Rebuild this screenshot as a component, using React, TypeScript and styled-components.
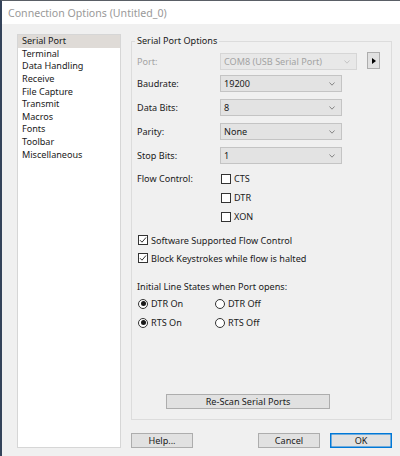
import React from "react";
import styled, { createGlobalStyle } from "styled-components";

const GlobalStyle = createGlobalStyle`
  html, body { margin: 0; padding: 0; background: #f0f0f0; }
  body {
    font-family: "Noto Sans", "Open Sans", sans-serif;
    font-size: 9.1px;
    color: #1a1a1a;
  }
  * { box-sizing: border-box; }
`;

const Window = styled.div`
  width: 400px;
  height: 456px;
  display: flex;
  flex-direction: column;
  border-top: 1px solid #5a5f66;
  border-left: 2px solid #34435a;
  background: #f0f0f0;
  overflow: hidden;
`;

const TitleBar = styled.div`
  height: 23px;
  flex: none;
  display: flex;
  align-items: center;
  padding-left: 6px;
  background: #ffffff;
  color: #999999;
  font-size: 10.6px;
`;

const Body = styled.div`
  flex: 1;
  display: grid;
  grid-template-columns: 104px 261px;
  column-gap: 10px;
  padding: 10px 8px 8px 15px;
`;

const ListBox = styled.ul`
  margin: 0;
  padding: 0;
  list-style: none;
  background: #ffffff;
  border: 1px solid #d6d6d6;
`;

const ListItem = styled.li<{ $selected?: boolean }>`
  height: 12.65px;
  line-height: 12.65px;
  padding-left: 4px;
  white-space: nowrap;
  background: ${(p) => (p.$selected ? "#dfdbd7" : "transparent")};
`;

const RightColumn = styled.div`
  display: flex;
  flex-direction: column;
  gap: 13px;
`;

const Group = styled.fieldset`
  flex: 1;
  margin: 0;
  padding: 0 6px 10px 5px;
  border: 1px solid #dcdcdc;
  min-width: 0;
`;

const Legend = styled.legend`
  padding: 0 2px;
  margin-left: -2px;
  line-height: 14px;
  height: 14px;
`;

const FieldRow = styled.div<{ $mt: number; $h?: number }>`
  display: grid;
  grid-template-columns: 83px 1fr;
  align-items: center;
  margin-top: ${(p) => p.$mt}px;
  height: ${(p) => (p.$h ? `${p.$h}px` : "auto")};
`;

const FlowRow = styled.div`
  display: grid;
  grid-template-columns: 83px 1fr;
  align-items: start;
  margin-top: 6px;
`;

const FieldLabel = styled.span<{ $disabled?: boolean }>`
  color: ${(p) => (p.$disabled ? "#a3a3a3" : "#1a1a1a")};
  line-height: 19px;
`;

const ComboWrap = styled.div`
  display: flex;
  align-items: center;
  gap: 10px;
`;

const Combo = styled.div<{ $disabled?: boolean; $width: number }>`
  width: ${(p) => p.$width}px;
  height: 17px;
  display: flex;
  align-items: center;
  justify-content: space-between;
  padding: 0 6px 0 3px;
  background: ${(p) => (p.$disabled ? "#e8e8e8" : "#e3e3e3")};
  border: 1px solid ${(p) => (p.$disabled ? "#d6d6d6" : "#c4c4c4")};
  color: ${(p) => (p.$disabled ? "#a3a3a3" : "#1a1a1a")};
`;

const Chevron = styled.svg<{ $disabled?: boolean }>`
  width: 6px;
  height: 4px;
  stroke: ${(p) => (p.$disabled ? "#c0c0c0" : "#7a7a7a")};
  fill: none;
  stroke-width: 0.9;
`;

const ArrowButton = styled.div`
  width: 13px;
  height: 17px;
  margin-top: -2px;
  display: flex;
  align-items: center;
  justify-content: center;
  background: #e1e1e1;
  border: 1px solid #adadad;
`;

const CheckList = styled.div<{ $mt?: number }>`
  display: flex;
  flex-direction: column;
  margin-top: ${(p) => p.$mt ?? 0}px;
`;

const CheckRow = styled.label<{ $h: number }>`
  display: flex;
  align-items: center;
  gap: 3px;
  height: ${(p) => p.$h}px;
  padding-left: 1px;
`;

const Box = styled.span`
  width: 10px;
  height: 10px;
  flex: none;
  display: flex;
  align-items: center;
  justify-content: center;
  border: 1px solid #333333;
  background: #ffffff;
`;

const SectionText = styled.div`
  margin-top: 13px;
  height: 14px;
  line-height: 14px;
`;

const RadioGrid = styled.div`
  display: grid;
  grid-template-columns: 77px 1fr;
  grid-auto-rows: 19px;
  padding-left: 1px;
`;

const RadioItem = styled.label`
  display: flex;
  align-items: center;
  gap: 3px;
`;

const RadioCircle = styled.span<{ $checked?: boolean }>`
  width: 10px;
  height: 10px;
  flex: none;
  border-radius: 50%;
  border: 1px solid #333333;
  background: #ffffff;
  display: flex;
  align-items: center;
  justify-content: center;
  &::after {
    content: "";
    width: 5px;
    height: 5px;
    border-radius: 50%;
    background: ${(p) => (p.$checked ? "#1a1a1a" : "transparent")};
  }
`;

const PushButton = styled.div<{ $default?: boolean; $width: number }>`
  width: ${(p) => p.$width}px;
  height: 15px;
  display: flex;
  align-items: center;
  justify-content: center;
  background: #e1e1e1;
  border: 1px solid ${(p) => (p.$default ? "#0078d7" : "#adadad")};
  box-shadow: ${(p) => (p.$default ? "inset 0 0 0 0.5px #0078d7" : "none")};
`;

const RescanRow = styled.div`
  margin-top: 62px;
  padding-left: 29px;
`;

const ButtonBar = styled.div`
  display: flex;
  gap: 10px;
  height: 15px;
`;

const Spacer = styled.div`
  flex: 1;
`;

const ChevronIcon = ({ disabled }: { disabled?: boolean }) => (
  <Chevron $disabled={disabled} viewBox="0 0 6 4">
    <polyline points="0.5,0.5 3,3.2 5.5,0.5" />
  </Chevron>
);

const Check = () => (
  <svg width="8" height="8" viewBox="0 0 8 8">
    <polyline points="1,4.2 3,6.2 7,1.5" fill="none" stroke="#1a1a1a" strokeWidth="0.9" />
  </svg>
);

const CheckBox = ({ checked }: { checked?: boolean }) => <Box>{checked ? <Check /> : null}</Box>;

const items = [
  "Serial Port",
  "Terminal",
  "Data Handling",
  "Receive",
  "File Capture",
  "Transmit",
  "Macros",
  "Fonts",
  "Toolbar",
  "Miscellaneous",
];

export default function App() {
  return (
    <>
      <GlobalStyle />
      <Window>
        <TitleBar>Connection Options (Untitled_0)</TitleBar>
        <Body>
          <ListBox>
            {items.map((it, i) => (
              <ListItem key={it} $selected={i === 0}>
                {it}
              </ListItem>
            ))}
          </ListBox>
          <RightColumn>
            <Group>
              <Legend>Serial Port Options</Legend>
              <FieldRow $mt={4} $h={17}>
                <FieldLabel $disabled>Port:</FieldLabel>
                <ComboWrap>
                  <Combo $disabled $width={137}>
                    <span>COM8 (USB Serial Port)</span>
                    <ChevronIcon disabled />
                  </Combo>
                  <ArrowButton>
                    <svg width="4" height="6" viewBox="0 0 4 6">
                      <polygon points="0,0 4,3 0,6" fill="#000" />
                    </svg>
                  </ArrowButton>
                </ComboWrap>
              </FieldRow>
              <FieldRow $mt={5} $h={17}>
                <FieldLabel>Baudrate:</FieldLabel>
                <Combo $width={122}>
                  <span>19200</span>
                  <ChevronIcon />
                </Combo>
              </FieldRow>
              <FieldRow $mt={7} $h={17}>
                <FieldLabel>Data Bits:</FieldLabel>
                <Combo $width={122}>
                  <span>8</span>
                  <ChevronIcon />
                </Combo>
              </FieldRow>
              <FieldRow $mt={7} $h={17}>
                <FieldLabel>Parity:</FieldLabel>
                <Combo $width={122}>
                  <span>None</span>
                  <ChevronIcon />
                </Combo>
              </FieldRow>
              <FieldRow $mt={7} $h={17}>
                <FieldLabel>Stop Bits:</FieldLabel>
                <Combo $width={122}>
                  <span>1</span>
                  <ChevronIcon />
                </Combo>
              </FieldRow>
              <FlowRow>
                <FieldLabel>Flow Control:</FieldLabel>
                <CheckList>
                  <CheckRow $h={19}>
                    <CheckBox />
                    CTS
                  </CheckRow>
                  <CheckRow $h={19}>
                    <CheckBox />
                    DTR
                  </CheckRow>
                  <CheckRow $h={19}>
                    <CheckBox />
                    XON
                  </CheckRow>
                </CheckList>
              </FlowRow>
              <CheckList $mt={5}>
                <CheckRow $h={18}>
                  <CheckBox checked />
                  Software Supported Flow Control
                </CheckRow>
                <CheckRow $h={18}>
                  <CheckBox checked />
                  Block Keystrokes while flow is halted
                </CheckRow>
              </CheckList>
              <SectionText>Initial Line States when Port opens:</SectionText>
              <RadioGrid>
                <RadioItem>
                  <RadioCircle $checked />
                  DTR On
                </RadioItem>
                <RadioItem>
                  <RadioCircle />
                  DTR Off
                </RadioItem>
                <RadioItem>
                  <RadioCircle $checked />
                  RTS On
                </RadioItem>
                <RadioItem>
                  <RadioCircle />
                  RTS Off
                </RadioItem>
              </RadioGrid>
              <RescanRow>
                <PushButton $width={164}>Re-Scan Serial Ports</PushButton>
              </RescanRow>
            </Group>
            <ButtonBar>
              <PushButton $width={62}>Help...</PushButton>
              <Spacer />
              <PushButton $width={62}>Cancel</PushButton>
              <PushButton $width={62} $default>
                OK
              </PushButton>
            </ButtonBar>
          </RightColumn>
        </Body>
      </Window>
    </>
  );
}
